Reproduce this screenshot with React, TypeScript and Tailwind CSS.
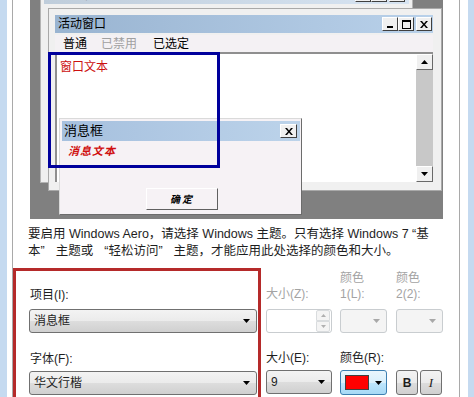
import React from 'react';

const Arrow = ({ color = '#000' }: { color?: string }) => (
  <svg width="7" height="4" viewBox="0 0 7 4">
    <path d="M0 0h7L3.5 4z" fill={color} />
  </svg>
);

const UpArrow = () => (
  <svg width="7" height="4" viewBox="0 0 7 4">
    <path d="M0 4h7L3.5 0z" fill="#000" />
  </svg>
);

function CapButton({ kind, w = 16 }: { kind: 'min' | 'max' | 'close'; w?: number }) {
  return (
    <div
      className="h-[14px] flex items-center justify-center bg-[#f0f0f0] border border-t-white border-l-white border-r-[#404040] border-b-[#404040]"
      style={{ width: w }}
    >
      {kind === 'min' && (
        <svg width="8" height="8" viewBox="0 0 8 8">
          <rect x="1" y="6" width="6" height="2" fill="#000" />
        </svg>
      )}
      {kind === 'max' && (
        <svg width="9" height="9" viewBox="0 0 9 9">
          <path d="M0 0h9v9H0z M1 2v6h7V2z" fillRule="evenodd" fill="#000" />
        </svg>
      )}
      {kind === 'close' && (
        <svg width="8" height="7" viewBox="0 0 8 7">
          <path d="M0 0h2l2 2.5L6 0h2L5 3.5 8 7H6L4 4.5 2 7H0l3-3.5z" fill="#000" />
        </svg>
      )}
    </div>
  );
}

function ScrollBtn({ up }: { up?: boolean }) {
  return (
    <div className="h-[16px] flex items-center justify-center bg-[#f0f0f0] border border-t-white border-l-white border-r-[#696969] border-b-[#696969]">
      {up ? <UpArrow /> : <Arrow />}
    </div>
  );
}

function Combo({ text, w }: { text: string; w: number }) {
  return (
    <div
      className="h-[24px] flex items-center justify-between pl-[4px] pr-[6px] rounded-[3px] border border-[#707070] bg-[linear-gradient(to_bottom,#f3f3f3_0%,#ebebeb_50%,#dddddd_51%,#d0d0d0_100%)] text-[12px]"
      style={{ width: w }}
    >
      <span>{text}</span>
      <Arrow />
    </div>
  );
}

function DisabledCombo() {
  return (
    <div className="w-[47px] h-[24px] flex items-center justify-end pr-[6px] rounded-[3px] border border-[#c9cdd0] bg-[#f4f4f4]">
      <Arrow color="#a8a8a8" />
    </div>
  );
}

function Preview() {
  return (
    <div className="relative ml-[17px] w-[413px] h-[219px] bg-[#808080] overflow-hidden">
      {/* inactive window */}
      <div className="absolute left-[10px] top-[-18px] w-[373px] h-[201px] bg-[#f0f0f0] border border-[#b4b4b4] p-[3px]">
        <div className="h-[18px] flex items-center justify-between pl-[4px] pr-[4px] bg-[linear-gradient(to_right,#bfcddb,#d7e4f2)] text-[12px] text-[#434e54]">
          <span>非活动窗口</span>
          <div className="flex">
            <CapButton kind="min" />
            <CapButton kind="max" />
            <div className="w-[2px]" />
            <CapButton kind="close" />
          </div>
        </div>
      </div>

      {/* active window */}
      <div className="absolute left-[18px] top-[8px] w-[394px] h-[183px] bg-[#f0f0f0] border border-[#a9a9a9] pl-[6px] pr-[8px] pt-[6px] flex flex-col">
        <div className="h-[18px] flex items-center justify-between pl-[3px] pr-[1px] bg-[linear-gradient(to_right,#99b4d1,#b9d1ea)] text-[12px] text-black">
          <span>活动窗口</span>
          <div className="flex">
            <CapButton kind="min" />
            <CapButton kind="max" />
            <div className="w-[2px]" />
            <CapButton kind="close" />
          </div>
        </div>
        <div className="mt-[2px] h-[17px] flex items-center pl-[8px] bg-[#f4f1f4] text-[12px]">
          <span className="text-black">普通</span>
          <span className="ml-[14px] text-[#a0a0a0]">已禁用</span>
          <span className="ml-[16px] text-black">已选定</span>
        </div>
        <div className="h-[130px] flex border-t-2 border-l-2 border-t-[#8f8f8f] border-l-[#8f8f8f] bg-white">
          <div className="flex-1 pl-[3px] pt-[4px] text-[12px] text-[#cc1010]">窗口文本</div>
          <div className="w-[17px] bg-[#c8c8c8] flex flex-col justify-between">
            <ScrollBtn up />
            <ScrollBtn />
          </div>
        </div>
      </div>

      {/* message box */}
      <div className="absolute left-[29px] top-[118px] w-[243px] h-[97px] bg-[#f6f2f5] border border-[#dadada] border-r-[#6c6c6c] border-b-[#6c6c6c] pt-[2px] pl-[2px] pr-[1px]">
        <div className="h-[20px] flex items-center justify-between pl-[2px] pr-[3px] bg-[linear-gradient(to_right,#a6c0de,#bcd3ea)] text-[13px] text-black">
          <span>消息框</span>
          <CapButton kind="close" w={17} />
        </div>
        <div className="pl-[6px] pt-[3px] text-[11px] leading-[14px] font-bold tracking-[1px] text-[#d01010] italic">消息文本</div>
        <div className="ml-[84px] mt-[30px] w-[72px] h-[22px] flex items-center justify-center bg-[#f6f2f5] border border-t-white border-l-white border-r-[#606060] border-b-[#606060] text-[10px] font-bold tracking-[2px] italic text-black">
          确定
        </div>
      </div>

      {/* annotation */}
      <div className="absolute left-[18px] top-[52px] w-[172px] h-[116px] border-[3px] border-[#00009c]" />
    </div>
  );
}

export default function App() {
  return (
    <div className="w-[474px] h-[397px] overflow-hidden flex bg-[#c5daf0] font-['Liberation_Sans','Noto_Sans_CJK_SC',sans-serif] text-[#1e1e1e]">
      <div className="w-[7px] shrink-0" />
      <div className="w-[461px] shrink-0 bg-white pl-[5px] pr-[8px]">
        <div className="h-full border-x border-[#a9a9a9] bg-white">
          <Preview />

          <p className="mt-[7px] pl-[15px] text-[12.5px] leading-[17px] whitespace-nowrap">
            要启用 Windows Aero，请选择 Windows 主题。只有选择 Windows 7 “基
            <br />
            本<span className="mr-[11px]">”</span>主题或<span className="ml-[11px]">“</span>轻松访问
            <span className="mr-[11px]">”</span>主题，才能应用此处选择的颜色和大小。
          </p>

          <div className="mt-[8px] flex items-start">
            <div className="w-[248px] h-[160px] border-[3px] border-[#b52a2a] pl-[13px] pr-[1px] pt-[16px] text-[12px] leading-[16px]">
              <div className="pl-[1px]">项目(I):</div>
              <div className="mt-[6px]">
                <Combo text="消息框" w={228} />
              </div>
              <div className="mt-[18px] pl-[1px]">字体(F):</div>
              <div className="mt-[4px]">
                <Combo text="华文行楷" w={228} />
              </div>
            </div>

            <div className="ml-[5px] pt-[2px] text-[12px] leading-[16px]">
              <div className="flex items-end text-[#a3a3a3]">
                <div className="w-[66px]">大小(Z):</div>
                <div className="w-[47px] ml-[8px]">
                  颜色
                  <br />
                  1(L):
                </div>
                <div className="w-[47px] ml-[9px]">
                  颜色
                  <br />
                  2(2):
                </div>
              </div>
              <div className="mt-[7px] flex">
                <div className="w-[66px] h-[24px] flex justify-end items-center pr-[1px] rounded-[3px] border border-[#c9cdd0] bg-white">
                  <div className="w-[14px] h-[22px] flex flex-col">
                    <div className="flex-1 flex items-center justify-center border border-[#d9dcde] rounded-t-[2px] bg-[#f4f4f4]">
                      <svg width="5" height="3" viewBox="0 0 5 3"><path d="M0 3h5L2.5 0z" fill="#b0b0b0" /></svg>
                    </div>
                    <div className="flex-1 flex items-center justify-center border border-[#d9dcde] rounded-b-[2px] bg-[#f4f4f4]">
                      <svg width="5" height="3" viewBox="0 0 5 3"><path d="M0 0h5L2.5 3z" fill="#b0b0b0" /></svg>
                    </div>
                  </div>
                </div>
                <div className="ml-[8px]">
                  <DisabledCombo />
                </div>
                <div className="ml-[9px]">
                  <DisabledCombo />
                </div>
              </div>

              <div className="mt-[17px] flex">
                <div className="w-[66px]">大小(E):</div>
                <div className="ml-[8px]">颜色(R):</div>
              </div>
              <div className="mt-[4px] flex">
                <Combo text="9" w={66} />
                <div className="ml-[8px] w-[47px] h-[25px] flex items-center justify-between pl-[4px] pr-[4px] rounded-[3px] border border-[#3c7fb1] bg-[linear-gradient(to_bottom,#eaf6fd_0%,#d9f0fc_50%,#bee6fd_51%,#a7d9f5_100%)]">
                  <div className="w-[24px] h-[15px] bg-[#ff0000] border border-[#404040]" />
                  <Arrow />
                </div>
                <div className="ml-[9px] w-[22px] h-[25px] flex items-center justify-center rounded-[3px] border border-[#707070] bg-[linear-gradient(to_bottom,#f3f3f3_0%,#ebebeb_50%,#dddddd_51%,#d0d0d0_100%)] text-[12px] font-bold">
                  B
                </div>
                <div className="ml-[2px] w-[22px] h-[25px] flex items-center justify-center rounded-[3px] border border-[#707070] bg-[linear-gradient(to_bottom,#f3f3f3_0%,#ebebeb_50%,#dddddd_51%,#d0d0d0_100%)] text-[13px] italic font-['Liberation_Serif',serif]">
                  I
                </div>
              </div>
            </div>
          </div>
        </div>
      </div>
      <div className="flex-1" />
    </div>
  );
}
